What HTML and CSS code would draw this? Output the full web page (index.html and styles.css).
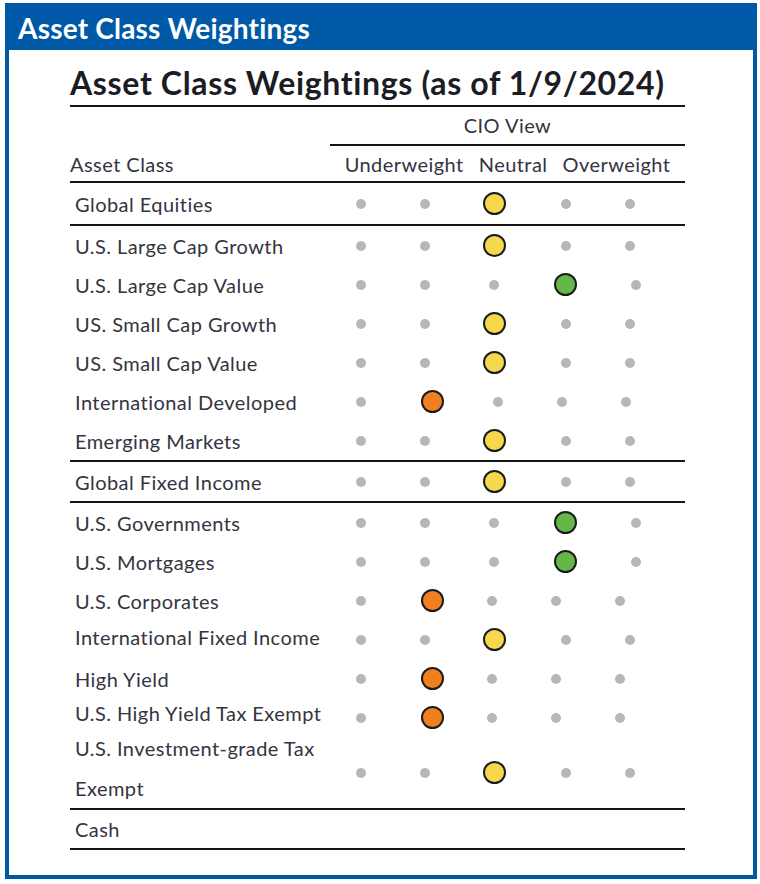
FILE: index.html
```html
<!DOCTYPE html>
<html lang="en">
<head>
<meta charset="utf-8">
<title>Asset Class Weightings</title>
<link rel="stylesheet" href="styles.css">
</head>
<body>
<div class="frame">
  <div class="banner">Asset Class Weightings</div>
  <div class="content">
    <h1 class="title">Asset Class Weightings (as of 1/9/2024)</h1>
    <div class="thead">
      <div class="cio-row">
        <div></div>
        <div class="cio">CIO View</div>
      </div>
      <div class="col-row">
        <div class="ac">Asset Class</div>
        <div class="views"><span>Underweight</span><span>Neutral</span><span>Overweight</span></div>
      </div>
    </div>

    <div class="section first">
      <div class="row nt"><div class="label">Global Equities</div><i class="dot"></i><i class="dot"></i><i class="mark yellow"></i><i class="dot"></i><i class="dot"></i></div>
    </div>

    <div class="section">
      <div class="row nt"><div class="label">U.S. Large Cap Growth</div><i class="dot"></i><i class="dot"></i><i class="mark yellow"></i><i class="dot"></i><i class="dot"></i></div>
      <div class="row ow"><div class="label">U.S. Large Cap Value</div><i class="dot"></i><i class="dot"></i><i class="dot"></i><i class="mark green"></i><i class="dot"></i></div>
      <div class="row nt"><div class="label">US. Small Cap Growth</div><i class="dot"></i><i class="dot"></i><i class="mark yellow"></i><i class="dot"></i><i class="dot"></i></div>
      <div class="row nt"><div class="label">US. Small Cap Value</div><i class="dot"></i><i class="dot"></i><i class="mark yellow"></i><i class="dot"></i><i class="dot"></i></div>
      <div class="row uw2"><div class="label">International Developed</div><i class="dot"></i><i class="mark orange"></i><i class="dot"></i><i class="dot"></i><i class="dot"></i></div>
      <div class="row nt"><div class="label">Emerging Markets</div><i class="dot"></i><i class="dot"></i><i class="mark yellow"></i><i class="dot"></i><i class="dot"></i></div>
    </div>

    <div class="section">
      <div class="row nt gfi"><div class="label">Global Fixed Income</div><i class="dot"></i><i class="dot"></i><i class="mark yellow"></i><i class="dot"></i><i class="dot"></i></div>
    </div>

    <div class="section">
      <div class="row ow"><div class="label">U.S. Governments</div><i class="dot"></i><i class="dot"></i><i class="dot"></i><i class="mark green"></i><i class="dot"></i></div>
      <div class="row ow"><div class="label">U.S. Mortgages</div><i class="dot"></i><i class="dot"></i><i class="dot"></i><i class="mark green"></i><i class="dot"></i></div>
      <div class="row uw"><div class="label">U.S. Corporates</div><i class="dot"></i><i class="mark orange"></i><i class="dot"></i><i class="dot"></i><i class="dot"></i></div>
      <div class="row nt"><div class="label up">International Fixed Income</div><i class="dot"></i><i class="dot"></i><i class="mark yellow"></i><i class="dot"></i><i class="dot"></i></div>
      <div class="row uw"><div class="label">High Yield</div><i class="dot"></i><i class="mark orange"></i><i class="dot"></i><i class="dot"></i><i class="dot"></i></div>
      <div class="row uw"><div class="label up2">U.S. High Yield Tax Exempt</div><i class="dot"></i><i class="mark orange"></i><i class="dot"></i><i class="dot"></i><i class="dot"></i></div>
      <div class="row nt double"><div class="label">U.S. Investment-grade Tax<br>Exempt</div><i class="dot"></i><i class="dot"></i><i class="mark yellow"></i><i class="dot"></i><i class="dot"></i></div>
    </div>

    <div class="section">
      <div class="row cash"><div class="label">Cash</div></div>
    </div>
  </div>
</div>
</body>
</html>
```

FILE: styles.css
```css
* { box-sizing: border-box; }

html, body {
  margin: 0;
  padding: 0;
  background: #ffffff;
}

.frame {
  width: 752px;
  height: 876px;
  margin: 3px 0 0 5px;
  border: 4px solid #0059a6;
  background: #ffffff;
  display: flex;
  flex-direction: column;
}

.banner {
  height: 43px;
  background: #0059a6;
  color: #ffffff;
  font-family: Lato, "Open Sans", sans-serif;
  font-weight: 700;
  font-size: 28px;
  letter-spacing: 0.2px;
  line-height: 43px;
  padding-left: 9px;
  white-space: nowrap;
}

.content {
  width: 615px;
  margin-left: 61px;
  font-family: Lato, "Noto Sans", sans-serif;
  color: #34343f;
}

.title {
  margin: 13px 0 0 0;
  font-family: Lato, "Open Sans", sans-serif;
  font-weight: 700;
  font-size: 32px;
  letter-spacing: 0.65px;
  line-height: 40px;
  color: #1c1c24;
  padding-bottom: 2px;
  border-bottom: 2px solid #151515;
  white-space: nowrap;
}

.thead {
  font-size: 20px;
  letter-spacing: 0.45px;
}

.cio-row {
  display: grid;
  grid-template-columns: 260px 1fr;
  height: 39px;
}

.cio {
  border-bottom: 2px solid #151515;
  text-align: center;
  line-height: 37px;
}

.col-row {
  display: grid;
  grid-template-columns: 260px 1fr;
  height: 37px;
  border-bottom: 2px solid #151515;
  align-items: center;
}

.views {
  display: flex;
  justify-content: center;
  gap: 15px;
}

.section {
  border-bottom: 2px solid #151515;
}

.row {
  display: grid;
  height: 39px;
  align-items: center;
  justify-items: center;
  font-size: 20px;
  letter-spacing: 0.45px;
}

.row.nt  { grid-template-columns: 260px 62px 66px 72px 72px 56px 1fr; }
.row.ow  { grid-template-columns: 260px 62px 66px 72px 70px 72px 1fr; }
.row.uw  { grid-template-columns: 260px 62px 80px 40px 88px 40px 1fr; }
.row.uw2 { grid-template-columns: 260px 62px 80px 52px 76px 52px 1fr; }

.section.first .row { height: 41px; }
.row.gfi { height: 39px; }
.row.double { height: 71px; }
.row.cash { height: 38px; grid-template-columns: 1fr; justify-items: start; }

.label {
  justify-self: start;
  padding-left: 5px;
  white-space: nowrap;
}

.row.double .label {
  align-self: start;
  margin-top: -9px;
  line-height: 40px;
}

.label.up { margin-bottom: 5px; }
.label.up2 { margin-bottom: 10px; }

.dot {
  display: block;
  width: 10px;
  height: 10px;
  border-radius: 50%;
  background: #b7b7ba;
}

.mark {
  display: block;
  width: 23px;
  height: 23px;
  border-radius: 50%;
  border: 2px solid #1b1b1b;
}

.yellow { background: #f5d84e; }
.orange { background: #f0801f; }
.green  { background: #63b847; }
```
